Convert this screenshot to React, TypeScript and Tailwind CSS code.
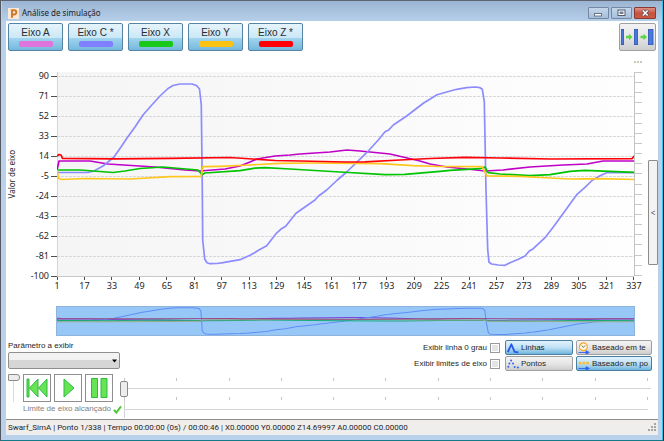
import { useState } from 'react';
import clsx from 'clsx';

type Point = [number, number];

interface Axis {
  id: string;
  label: string;
  swatch: string;
  line: string;
  points: Point[];
}

// Plot space: 577 x 204, y grows downwards, grid lines every 20 starting at 4
const PLOT_W = 577;
const PLOT_H = 204;

const AXES: Axis[] = [
  {
    id: 'a',
    label: 'Eixo A',
    swatch: 'bg-[#df74dc]',
    line: '#c000c8',
    points: [
      [0, 98], [2, 89], [33, 89], [51, 92], [98, 95], [128, 98], [143, 99], [168, 97], [183, 94],
      [193, 90], [200, 87], [218, 84], [233, 83], [243, 82], [273, 80], [290, 78], [303, 79],
      [333, 82], [363, 89], [373, 92], [390, 95], [410, 97], [428, 99], [446, 98], [473, 95],
      [506, 93], [530, 92], [546, 89], [577, 89],
    ],
  },
  {
    id: 'c',
    label: 'Eixo C *',
    swatch: 'bg-[#8080ff]',
    line: '#8c8cff',
    points: [
      [0, 100.5], [31, 100.5], [37, 99], [46, 94], [51, 90], [57, 85], [64, 75], [70, 66], [78, 55],
      [86, 43], [93, 35], [103, 24], [111, 16.5], [116, 13.5], [123, 12], [135, 12], [139.5, 13.5],
      [142.5, 17], [144.3, 33], [145.3, 118], [145.7, 168], [147.7, 187], [150, 190.7], [153, 191.7],
      [160, 191.5], [166, 190.7], [183, 187.7], [193, 183.3], [198, 180.5], [201, 178.5],
      [209.7, 173.7], [219, 161.7], [223.7, 157.3], [228.7, 154.3], [239, 141.3], [258, 128],
      [261.3, 124.3], [269.7, 118], [280.3, 108], [289.7, 100], [309.7, 80.7], [321.3, 68],
      [328, 59.7], [331.3, 58.3], [336.3, 53], [349.7, 44], [366.3, 31.3], [380, 22.7], [389.7, 20],
      [399.7, 17.3], [409.7, 15.7], [418, 15], [423, 15.7], [425.3, 17.3], [427.3, 29.7], [429, 118],
      [430.7, 177.3], [432, 190.3], [434.7, 192], [441.3, 193], [448, 193.3], [453, 190.7],
      [461.3, 187.3], [468, 184], [472.3, 179], [476.3, 176.7], [488, 165.7], [496.3, 155],
      [506.3, 141.3], [519.7, 122.7], [528, 115.3], [535, 108.5], [543, 103.7], [549.7, 100.7],
      [577, 100.7],
    ],
  },
  {
    id: 'x',
    label: 'Eixo X',
    swatch: 'bg-[#19c819]',
    line: '#00c400',
    points: [
      [0, 98], [23, 98], [56, 100.5], [68, 99], [83, 96.5], [106, 95], [123, 96.5], [141, 98],
      [145, 102.7], [148, 101], [183, 98.7], [198, 96.2], [208, 95.7], [233, 97], [283, 100],
      [328, 102.7], [348, 102.3], [383, 99.3], [393, 98.3], [423, 96.7], [428, 95], [431, 100.7],
      [443, 102], [473, 103.7], [493, 102.7], [513, 99.3], [528, 98.3], [553, 99.3], [577, 100.3],
    ],
  },
  {
    id: 'y',
    label: 'Eixo Y',
    swatch: 'bg-[#fac314]',
    line: '#ffc61e',
    points: [
      [0, 98], [1.5, 106.5], [5, 107.5], [28, 106.5], [73, 107], [113, 104.7], [144, 104.5],
      [146, 94.7], [163, 94.3], [193, 93], [223, 91.3], [253, 91], [323, 91.7], [356, 93.7],
      [383, 94.5], [425, 94.7], [430, 104], [463, 104.3], [493, 106], [513, 107], [543, 106.7],
      [577, 107.5],
    ],
  },
  {
    id: 'z',
    label: 'Eixo Z *',
    swatch: 'bg-[#ff0008]',
    line: '#ff0008',
    points: [
      [0, 84], [2, 82.5], [4, 83], [5.5, 86.3], [58, 86.9], [113, 86.3], [173, 85.5], [188, 86.5],
      [218, 88.5], [243, 89], [288, 90], [308, 89.8], [343, 88], [373, 86.5], [408, 85.3],
      [443, 86], [493, 87], [575, 86.7], [577, 84],
    ],
  },
];

// Drawing order, back to front
const LAYERS = ['a', 'c', 'x', 'y', 'z'];

const Y_TICKS = [90, 71, 52, 33, 14, -5, -24, -43, -62, -81, -100];
const X_TICKS = Array.from({ length: 22 }, (_, i) => 1 + i * 16);

const ACTIVE =
  'border-[#4a7d9f] bg-linear-to-b from-[#e2f3fc] from-0% via-[#bfe1f4] via-50% to-[#6db5dd] to-100%';
const IDLE = 'border-[#a0a0a0] bg-linear-to-b from-[#f3f3f3] via-[#e6e6e6] to-[#cdcdcd]';

function Curves({ width }: { width: number }) {
  return (
    <>
      {LAYERS.map((id) => {
        const axis = AXES.find((a) => a.id === id)!;
        return (
          <polyline
            key={id}
            points={axis.points.map((p) => p.join(',')).join(' ')}
            fill="none"
            stroke={axis.line}
            strokeWidth={width}
            strokeLinejoin="round"
            vectorEffect="non-scaling-stroke"
          />
        );
      })}
    </>
  );
}

function TitleBar() {
  return (
    <header className="flex h-5 items-center bg-linear-to-b from-[#9bb4d2] to-[#b6cfe9] pt-1 pr-[6px] pl-[6px]">
      <svg width="11" height="11" viewBox="0 0 11 11" aria-hidden="true">
        <rect width="11" height="11" fill="#fbe9d8" />
        <path d="M4 9.8V2.2H6.2a2.1 2.1 0 0 1 0 4.3H4.4" fill="none" stroke="#c9772a" strokeWidth="1.9" />
        <path d="M2.4 1.6H6" stroke="#e7a04f" strokeWidth="1" />
      </svg>
      <h1 className="ml-[3px] grow text-[8px] leading-none text-[#1c1c24]">Análise de simulação</h1>
      <div className="flex gap-[2px]">
        <button type="button" aria-label="Minimizar" className="flex h-3 w-[21px] items-center justify-center rounded-[1px] border border-[#7488a4] bg-linear-to-b from-[#c5d6ea] to-[#a6bfdc]">
          <svg width="9" height="8" viewBox="0 0 9 8">
            <rect x="0.5" y="4.5" width="7" height="2.5" fill="#fff" stroke="#6b7587" />
          </svg>
        </button>
        <button type="button" aria-label="Maximizar" className="flex h-3 w-[21px] items-center justify-center rounded-[1px] border border-[#7488a4] bg-linear-to-b from-[#c5d6ea] to-[#a6bfdc]">
          <svg width="9" height="8" viewBox="0 0 9 8">
            <rect x="1" y="1" width="7" height="5.5" fill="#fff" stroke="#535d70" />
            <rect x="3" y="3" width="3" height="1.5" fill="#9fb2cc" stroke="#535d70" strokeWidth="0.8" />
          </svg>
        </button>
        <button type="button" aria-label="Fechar" className="flex h-3 w-[22px] items-center justify-center rounded-[1px] border border-[#8a3a34] bg-linear-to-b from-[#dc9488] via-[#c55240] to-[#cf5a42]">
          <svg width="9" height="8" viewBox="0 0 9 8">
            <path d="M1.5 1.2 7 6.8M7 1.2 1.5 6.8" stroke="#5f4a50" strokeWidth="3" />
            <path d="M1.8 1.5 6.7 6.5M6.7 1.5 1.8 6.5" stroke="#fff" strokeWidth="1.6" />
          </svg>
        </button>
      </div>
    </header>
  );
}

function Toolbar({ shown, onToggle }: { shown: string[]; onToggle: (id: string) => void }) {
  return (
    <div className="flex justify-between pt-[2px] pr-[2px] pl-[2px]">
      <div className="flex gap-[5px]">
        {AXES.map((axis) => (
          <button
            key={axis.id}
            type="button"
            onClick={() => onToggle(axis.id)}
            className={clsx(
              'flex h-7 w-[55px] flex-col items-center rounded-[2px] border pt-[3px]',
              shown.includes(axis.id)
                ? 'border-[#5585a3] bg-[linear-gradient(to_bottom,#e6f4fb_0%,#cbe8f6_52%,#a3d5ed_53%,#74b8de_100%)]'
                : IDLE,
            )}
          >
            <span className="font-['Liberation_Sans',sans-serif] text-[10px] leading-[11px] text-[#2a2a32]">{axis.label}</span>
            <span className={clsx('mt-[3px] h-[6px] w-[34px] rounded-[2px]', axis.swatch)} />
          </button>
        ))}
      </div>
      <button type="button" aria-label="Espessura" className={clsx('flex h-7 w-[37px] items-center justify-center rounded-[2px] border', IDLE)}>
        <svg width="35" height="18" viewBox="0 0 35 18">
          <g fill="#4a78dc" stroke="#2f55b4" strokeWidth="0.8">
            <rect x="1.4" y="1.4" width="2.2" height="15.2" />
            <rect x="14.4" y="1.4" width="3.2" height="15.2" />
            <rect x="28.4" y="1.4" width="4.6" height="15.2" />
          </g>
          <g fill="#5ad640">
            <path d="M6 7.8H9V5.8L12.5 9 9 12.2V10.2H6z" />
            <path d="M20.5 7.8H23.5V5.8L27 9 23.5 12.2V10.2H20.5z" />
          </g>
        </svg>
      </button>
    </div>
  );
}

function Chart() {
  return (
    <section className="grid grid-cols-[12px_39px_minmax(0,1fr)_8px_16px] grid-rows-[21px_204px_30px]">
      <div className="col-start-4 flex gap-[1px] pt-[10px]">
        <i className="size-[2px] bg-[#cfc9b8]" />
        <i className="size-[2px] bg-[#cfc9b8]" />
        <i className="size-[2px] bg-[#cfc9b8]" />
      </div>

      <div className="col-start-1 row-start-2 flex items-center justify-center">
        <span className="rotate-180 text-[8px] leading-[8px] whitespace-nowrap [writing-mode:vertical-rl]">Valor de eixo</span>
      </div>

      <div className="row-start-2 flex flex-col justify-between pt-1 text-[9px]">
        {Y_TICKS.map((v) => (
          <div key={v} className="flex h-0 items-center justify-end gap-[2px]">
            <span>{v}</span>
            <i className="h-px w-[6px] bg-[#505050]" />
          </div>
        ))}
      </div>

      <svg className="row-start-2 h-full w-full bg-linear-to-r from-[#f5f5f5] to-[#fefefe]" viewBox={`0 0 ${PLOT_W} ${PLOT_H}`} preserveAspectRatio="none">
        {Y_TICKS.map((v, i) => (
          <line key={v} x1="0" x2={PLOT_W} y1={4.5 + i * 20} y2={4.5 + i * 20} stroke="#d8d8d8" strokeDasharray="3 1" />
        ))}
        <line x1="0.5" x2="0.5" y1="0" y2={PLOT_H} stroke="#d4d4d4" />
        <Curves width={1.7} />
      </svg>

      <div className="row-start-2 flex flex-col justify-between border-l border-[#c4c4c4]">
        {Array.from({ length: 21 }, (_, i) => (
          <i key={i} className="h-px bg-[#c8c8c8]" />
        ))}
      </div>

      <button type="button" aria-label="Abrir painel" className="row-start-2 mt-[88px] h-[105px] w-[10px] justify-self-end rounded-[1px] border border-[#8c8c8c] bg-[#f3f3f3] text-[8px] leading-none text-[#505050]">
        &lt;
      </button>

      <div className="col-start-3 row-start-3 flex justify-between border-t border-[#c8c8c8] text-[9px] leading-[12px]">
        {X_TICKS.map((v) => (
          <div key={v} className="flex w-0 flex-col items-center">
            <i className="h-[3px] w-px bg-[#505050]" />
            <span>{v}</span>
          </div>
        ))}
      </div>
    </section>
  );
}

function Overview() {
  return (
    <div className="relative mr-[23px] ml-[50px] h-[30px]">
      <svg className="h-full w-full" viewBox={`0 0 ${PLOT_W} ${PLOT_H}`} preserveAspectRatio="none">
        <Curves width={1} />
      </svg>
      <div className="absolute inset-0 border border-[#8fb4dc] bg-[#3090f0]/50" />
    </div>
  );
}

function ModeButton({ active, icon, label, wide, onClick }: {
  active: boolean;
  icon: React.ReactNode;
  label: string;
  wide?: boolean;
  onClick: () => void;
}) {
  return (
    <button
      type="button"
      onClick={onClick}
      className={clsx(
        'flex h-[15px] items-center gap-[2px] rounded-[2px] border pl-px text-[8px] leading-none whitespace-nowrap',
        wide ? 'w-[76px]' : 'w-[68px]',
        active ? ACTIVE : IDLE,
      )}
    >
      <svg width="12" height="12" viewBox="0 0 12 12" className="shrink-0">
        {icon}
      </svg>
      {label}
    </button>
  );
}

const ARROW = <path d="M0.5 10.5H9M8 8.7 11.3 10.5 8 12z" fill="#2f62f0" stroke="#2f62f0" strokeWidth="0.9" />;

function Options() {
  const [style, setStyle] = useState('lines');
  const [basis, setBasis] = useState('point');

  return (
    <div className="flex justify-between pt-1 pr-[6px] pl-[2px] font-['Liberation_Sans',sans-serif]">
      <div className="flex flex-col">
        <label htmlFor="param" className="text-[8px] leading-[12px]">Parâmetro a exibir</label>
        <div className="relative">
          <select id="param" className="block h-[17px] w-28 appearance-none rounded-[2px] border border-[#8f8f8f] bg-linear-to-b from-[#f2f2f2] from-50% to-[#d6d6d6] to-50% text-[8px]">
            <option value=""></option>
          </select>
          <svg className="pointer-events-none absolute top-[7px] right-[3px]" width="5" height="4" viewBox="0 0 5 4">
            <path d="M0 0.5H5L2.5 3.5z" />
          </svg>
        </div>
      </div>

      <div className="flex gap-[5px] text-[8px]">
        <div className="flex flex-col gap-px">
          {['Exibir linha 0 grau', 'Exibir limites de eixo'].map((text) => (
            <label key={text} className="flex h-[15px] items-center justify-end gap-[3px]">
              {text}
              <input type="checkbox" className="size-[10px] appearance-none border border-[#9a9a9a] bg-[#e4e4e4] inset-ring inset-ring-white checked:bg-[#4a78dc]" />
            </label>
          ))}
        </div>
        <div className="grid grid-cols-[68px_76px] gap-x-[3px] gap-y-px">
          <ModeButton
            active={style === 'lines'}
            onClick={() => setStyle('lines')}
            label="Linhas"
            icon={<path d="M0.8 10 4.4 2.3 7.6 9.8 11.4 10.4" fill="none" stroke="#2457f0" strokeWidth="1.8" strokeLinejoin="round" />}
          />
          <ModeButton
            wide
            active={basis === 'time'}
            onClick={() => setBasis('time')}
            label="Baseado em te"
            icon={
              <>
                <circle cx="5.4" cy="4.8" r="3.9" fill="#fff6e0" stroke="#f5a52c" strokeWidth="1.2" />
                <path d="M3.8 3.6 5.4 5.4 7.2 3.4" fill="none" stroke="#666" strokeWidth="0.9" />
                {ARROW}
              </>
            }
          />
          <ModeButton
            active={style === 'points'}
            onClick={() => setStyle('points')}
            label="Pontos"
            icon={
              <g fill="#3563f0">
                <circle cx="1.3" cy="8.8" r="1" />
                <circle cx="2.4" cy="5.6" r="1" />
                <circle cx="4.1" cy="2.6" r="1" />
                <circle cx="6" cy="5.4" r="1" />
                <circle cx="7.6" cy="9" r="1" />
                <circle cx="10.9" cy="9.6" r="1" />
              </g>
            }
          />
          <ModeButton
            wide
            active={basis === 'point'}
            onClick={() => setBasis('point')}
            label="Baseado em po"
            icon={
              <>
                <g fill="#f7bd3a">
                  <circle cx="2" cy="5" r="1.5" />
                  <circle cx="5.8" cy="5" r="1.5" />
                  <circle cx="9.6" cy="5" r="1.5" />
                </g>
                {ARROW}
              </>
            }
          />
        </div>
      </div>
    </div>
  );
}

const TRANSPORT = [
  { label: 'Início', d: 'M3 4H5V22H3zM14 4V22L5.5 13zM23 4V22L14.5 13z' },
  { label: 'Reproduzir', d: 'M9 4 19 13 9 22z' },
  { label: 'Pausar', d: 'M5.5 3.5H11.5V22.5H5.5zM15 3.5H21V22.5H15z' },
];

function TickRow() {
  return (
    <div className="ml-1 flex justify-between pr-[3px]">
      {Array.from({ length: 11 }, (_, i) => (
        <i key={i} className="h-[3px] w-px bg-[#c4c4c4]" />
      ))}
    </div>
  );
}

function Playback() {
  const [position, setPosition] = useState(0);
  const [speed, setSpeed] = useState(100);

  return (
    <div className="flex pt-[3px] pr-[7px] pl-[2px]">
      <input
        type="range"
        aria-label="Velocidade"
        value={speed}
        onChange={(e) => setSpeed(Number(e.target.value))}
        className="block h-7 w-3 appearance-none bg-linear-to-r from-transparent from-[5px] via-[#b4b4b4] via-[5px] to-transparent to-[6px] [direction:rtl] [writing-mode:vertical-lr] [&::-webkit-slider-thumb]:h-[7px] [&::-webkit-slider-thumb]:w-3 [&::-webkit-slider-thumb]:appearance-none [&::-webkit-slider-thumb]:rounded-l-[1px] [&::-webkit-slider-thumb]:rounded-r-[3px] [&::-webkit-slider-thumb]:border [&::-webkit-slider-thumb]:border-[#8a8a8a] [&::-webkit-slider-thumb]:bg-[#ececec]"
      />
      <div className="ml-[3px] w-[97px] shrink-0">
        <div className="flex gap-[3px]">
          {TRANSPORT.map((b) => (
            <button key={b.label} type="button" aria-label={b.label} className="flex size-7 items-center justify-center border border-[#8e8e8e] bg-white">
              <svg width="26" height="26" viewBox="0 0 26 26">
                <path d={b.d} fill="#66e455" stroke="#2fba3e" strokeWidth="1" />
              </svg>
            </button>
          ))}
        </div>
        <p className="mt-px flex h-3 items-center gap-[2px] font-['Liberation_Sans',sans-serif] text-[8px] leading-none whitespace-nowrap text-[#808080]">
          Limite de eixo alcançado
          <svg width="9" height="9" viewBox="0 0 9 9" className="shrink-0">
            <path d="M1 5 3.3 7.5 8 1.3" fill="none" stroke="#4cc832" strokeWidth="2" />
          </svg>
        </p>
      </div>
      <div className="grow pt-1">
        <TickRow />
        <input
          type="range"
          aria-label="Ponto"
          min={0}
          max={337}
          value={position}
          onChange={(e) => setPosition(Number(e.target.value))}
          className="block h-4 w-full appearance-none bg-linear-to-b from-transparent from-[7px] via-[#a8a8a8] via-[7px] to-transparent to-[8px] [&::-webkit-slider-thumb]:h-4 [&::-webkit-slider-thumb]:w-2 [&::-webkit-slider-thumb]:appearance-none [&::-webkit-slider-thumb]:rounded-[2px] [&::-webkit-slider-thumb]:border [&::-webkit-slider-thumb]:border-[#8a8a8a] [&::-webkit-slider-thumb]:bg-[#ededed]"
        />
        <TickRow />
        <div className="mr-[3px] ml-1 h-[10px] border-b border-l border-[#d4d4d4]" />
        <div className="ml-1 h-2 border-l border-[#d4d4d4]" />
      </div>
    </div>
  );
}

function StatusBar() {
  return (
    <footer className="mt-auto flex h-4 items-center justify-between border-t border-[#8c8c8c] bg-[#f0eded] pr-[2px] pl-[2px] leading-none">
      <span className="font-[Roboto,sans-serif] text-[8px] whitespace-nowrap">
        Swarf_SimA | Ponto 1/338 | Tempo 00:00:00 (0s) / 00:00:46 | X0.00000 Y0.00000 Z14.69997 A0.00000 C0.00000
      </span>
      <svg width="8" height="9" viewBox="0 0 8 9" fill="#a8a4a4" aria-hidden="true">
        <path d="M6 0h2v2H6zM3 3h2v2H3zM6 3h2v2H6zM0 6h2v2H0zM3 6h2v2H3zM6 6h2v2H6z" />
      </svg>
    </footer>
  );
}

export default function App() {
  const [shown, setShown] = useState(AXES.map((a) => a.id));

  const toggle = (id: string) => {
    setShown((prev) => (prev.includes(id) ? prev.filter((x) => x !== id) : [...prev, id]));
  };

  return (
    <div className="flex min-h-screen flex-col border-t border-r border-b border-l border-t-[#5d6470] border-r-[#0c1a26] border-b-[#157a88] border-l-[#55585f] bg-[#b9d1ea] font-['Noto_Sans',sans-serif] text-[#1e1e1e]">
      <div className="flex grow flex-col border-r border-[#35c3ea] pb-[5px]">
        <div className="pl-[1px]">
          <TitleBar />
        </div>
        <main className="mr-1 ml-[5px] flex grow flex-col bg-white">
          <Toolbar shown={shown} onToggle={toggle} />
          <Chart />
          <Overview />
          <Options />
          <Playback />
          <StatusBar />
        </main>
      </div>
    </div>
  );
}
